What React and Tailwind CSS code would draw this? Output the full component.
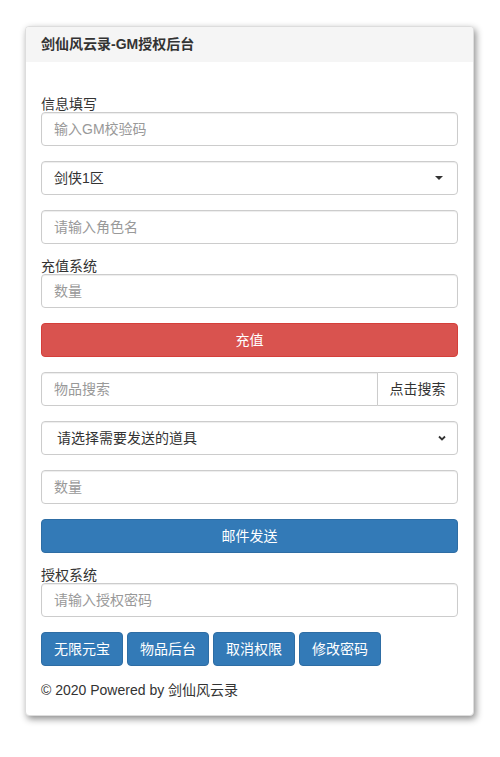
const FONT = { fontFamily: '"Liberation Sans", "Noto Sans CJK SC", sans-serif' }

const inputCls =
  'block w-full h-[34px] px-3 border border-[#ccc] rounded-[4px] bg-white text-[14px] leading-[20px] text-[#555] placeholder:text-[#999] shadow-[inset_0_1px_1px_rgba(0,0,0,0.075)] outline-none'

function Label({ children, first }) {
  return (
    <div className={`h-5 pt-[2px] text-[14px] leading-[20px] text-[#333] ${first ? 'mt-[15px]' : 'mt-[10px]'}`}>
      {children}
    </div>
  )
}

function Btn({ children, color }) {
  const c = color === 'red'
    ? 'bg-[#d9534f] border-[#d43f3a]'
    : 'bg-[#337ab7] border-[#2e6da4]'
  return (
    <button className={`block w-full h-[34px] border rounded-[4px] text-white text-[14px] leading-[20px] ${c}`}>
      {children}
    </button>
  )
}

export default function App() {
  return (
    <div className="min-h-[757px] bg-white pt-[26px] px-[25px]" style={FONT}>
      <div className="w-[449px] rounded-[4px] border border-[#ddd] bg-white shadow-[2px_3px_7px_rgba(0,0,0,0.45)] overflow-hidden">
        {/* heading */}
        <div className="h-[35px] bg-[#f5f5f5] px-[15px] flex items-center text-[14px] font-bold text-[#333]">
          剑仙风云录-GM授权后台
        </div>

        <div className="px-[15px] pt-[15px] pb-[15px]">
          <Label first>信息填写</Label>
          <input className={inputCls} placeholder="输入GM校验码" />

          {/* custom dropdown */}
          <div className="mt-[15px] h-[34px] px-3 border border-[#ccc] rounded-[4px] flex items-center justify-between text-[14px] text-[#333] shadow-[inset_0_1px_1px_rgba(0,0,0,0.075)]">
            <span>剑侠1区</span>
            <span className="w-0 h-0 border-l-[4px] border-r-[4px] border-t-[4px] border-l-transparent border-r-transparent border-t-[#333] mr-[2px]" />
          </div>

          <input className={`${inputCls} mt-[15px]`} placeholder="请输入角色名" />

          <Label>充值系统</Label>
          <input className={inputCls} placeholder="数量" />

          <div className="mt-[15px]">
            <Btn color="red">充值</Btn>
          </div>

          {/* search group */}
          <div className="mt-[15px] flex h-[34px]">
            <input
              className="flex-1 min-w-0 h-[34px] px-3 border border-[#ccc] rounded-l-[4px] text-[14px] text-[#555] placeholder:text-[#999] outline-none shadow-[inset_0_1px_1px_rgba(0,0,0,0.075)]"
              placeholder="物品搜索"
            />
            <button className="h-[34px] w-[81px] -ml-px border border-[#ccc] rounded-r-[4px] bg-white text-[14px] text-[#333]">
              点击搜索
            </button>
          </div>

          {/* native-like select */}
          <div className="mt-[15px] h-[34px] pl-[15px] pr-[10px] border border-[#ccc] rounded-[4px] flex items-center justify-between text-[14px] text-[#333] shadow-[inset_0_1px_1px_rgba(0,0,0,0.075)]">
            <span>请选择需要发送的道具</span>
            <svg width="10" height="10" viewBox="0 0 10 10">
              <path d="M2 3.5 L5 6.5 L8 3.5" fill="none" stroke="#333" strokeWidth="1.8" />
            </svg>
          </div>

          <input className={`${inputCls} mt-[15px]`} placeholder="数量" />

          <div className="mt-[15px]">
            <Btn>邮件发送</Btn>
          </div>

          <Label>授权系统</Label>
          <input className={inputCls} placeholder="请输入授权密码" />

          <div className="mt-[15px] flex gap-[4px]">
            {['无限元宝', '物品后台', '取消权限', '修改密码'].map(t => (
              <button
                key={t}
                className="h-[34px] w-[82px] border border-[#2e6da4] rounded-[4px] bg-[#337ab7] text-white text-[14px]"
              >
                {t}
              </button>
            ))}
          </div>

          <div className="mt-[14px] text-[14px] leading-[20px] text-[#333]">
            © 2020 Powered by 剑仙风云录
          </div>
        </div>
      </div>
    </div>
  )
}
